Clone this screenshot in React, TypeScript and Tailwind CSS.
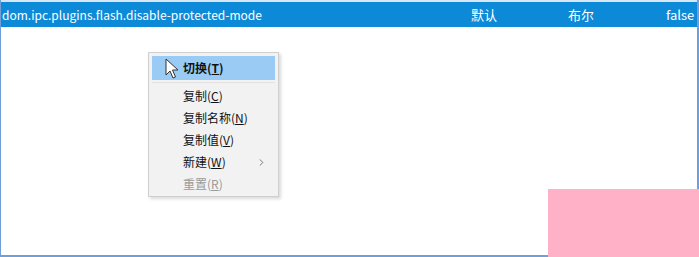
import { ChevronRight } from "lucide-react";

const items = [
  { label: "复制", key: "C" },
  { label: "复制名称", key: "N" },
  { label: "复制值", key: "V" },
  { label: "新建", key: "W", sub: true },
  { label: "重置", key: "R", disabled: true },
];

export default function App() {
  const font = { fontFamily: '"Noto Sans CJK SC", "Noto Sans", sans-serif' };
  return (
    <div className="relative w-[699px] h-[257px] overflow-hidden bg-white" style={font}>
      <div className="h-full border-l border-r-2 border-b-2 border-[#6f9fd8]">
        <div className="h-[2px] bg-[#d6e6f5]" />
        <div className="h-[25px] bg-[#0c8ad8] text-white text-[12px] flex items-center leading-none">
          <span className="pl-[1px] w-[470px]">dom.ipc.plugins.flash.disable-protected-mode</span>
          <span className="w-[97px] text-[13px]">默认</span>
          <span className="w-[98px] text-[13px]">布尔</span>
          <span className="text-[13px]">false</span>
        </div>
      </div>

      <div className="absolute left-[148px] top-[52px] w-[131px] bg-[#f2f2f2] border border-[#cfcfcf] shadow-[2px_2px_3px_rgba(0,0,0,0.15)] pt-[3px] px-[3px] pb-[1px] text-[12px] text-[#111]">
        <div className="h-[24px] bg-[#99cbf5] flex items-center pl-[31px] font-bold">
          切换(<span className="underline">T</span>)
        </div>
        <div className="h-px bg-[#e2e2e2] mt-[2px] mb-[2px]" />
        {items.map((it) => (
          <div
            key={it.key}
            className={`h-[22px] flex items-center pl-[31px] pr-[8px] ${it.disabled ? "text-[#9a9a9a]" : ""}`}
          >
            <span className="flex-1">
              {it.label}(<span className="underline">{it.key}</span>)
            </span>
            {it.sub && <ChevronRight size={11} strokeWidth={1.5} className="text-[#444]" />}
          </div>
        ))}
      </div>

      <svg className="absolute left-[165px] top-[58px]" width="14" height="22" viewBox="0 0 14 22">
        <path
          d="M1 1 L1 17 L5 13 L8 20 L10.5 19 L7.5 12 L13 12 Z"
          fill="white"
          stroke="#333"
          strokeWidth="1"
          strokeLinejoin="round"
        />
      </svg>

      <div className="absolute left-[548px] top-[189px] w-[151px] h-[68px] bg-[#ffb2c7]" />
    </div>
  );
}
